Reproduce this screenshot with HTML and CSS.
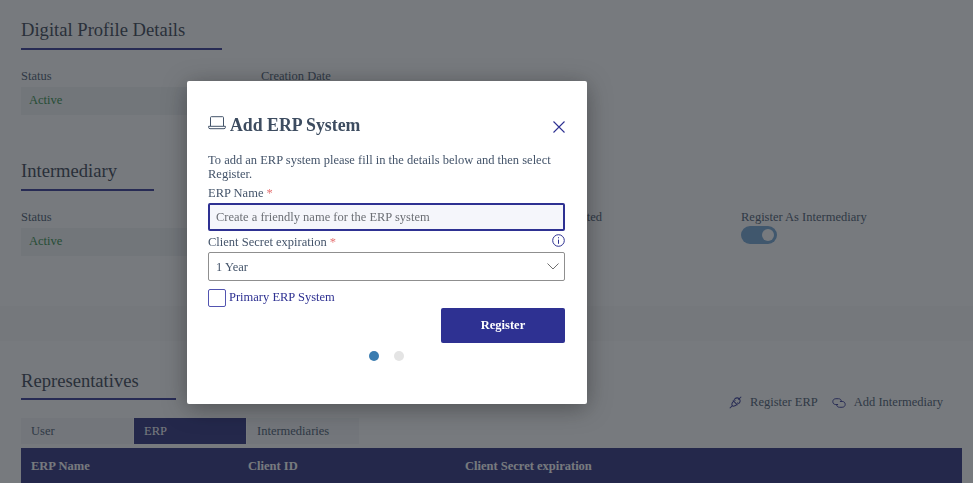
FILE: index.html

```html
<!DOCTYPE html>
<html lang="en">
<head>
  <meta charset="UTF-8" />
  <meta name="viewport" content="width=device-width, initial-scale=1.0"/>
  <title>Add ERP System</title>
  <link rel="stylesheet" href="styles.css">
</head>
<body>
  <div class="page">
    <section class="card">
      <h2 class="title title-profile">Digital Profile Details</h2>
      <div class="fields">
        <div class="field">
          <span class="field-label">Status</span>
          <div class="field-value active">Active</div>
        </div>
        <div class="field">
          <span class="field-label">Creation Date</span>
        </div>
      </div>
      <h2 class="title title-intermediary">Intermediary</h2>
      <div class="fields">
        <div class="field">
          <span class="field-label">Status</span>
          <div class="field-value active">Active</div>
        </div>
        <div class="field"></div>
        <div class="field">
          <span class="field-label">Intermediary Posted</span>
        </div>
        <div class="field">
          <span class="field-label">Register As Intermediary</span>
          <div class="toggle"><span class="knob"></span></div>
        </div>
      </div>
    </section>

    <div class="band"></div>

    <section class="card card-reps">
      <div class="reps-head">
        <h2 class="title title-reps">Representatives</h2>
        <div class="actions">
          <a class="action">
            <svg class="action-icon" width="13" height="13" viewBox="0 0 14 14" fill="none" stroke="#2e3192" stroke-width="1.1">
              <path d="M0.8 13.2 L4 10 M10 4 L13.2 0.8 M4.2 4.8 L9.2 9.8 M5 5.5 C2.6 7.6 2.8 9.6 3.6 10.4 C4.4 11.2 6.4 11.4 8.5 9 M5.4 3.6 L6.9 5.1 M8.9 7.1 L10.4 8.6 M6 3.2 C8 1.6 10 2 11 3 C12 4 12.4 6 10.8 8"/>
            </svg>
            Register ERP
          </a>
          <a class="action">
            <svg class="action-icon" width="14" height="10" viewBox="0 0 15 11" fill="none" stroke="#2e3192" stroke-width="1.1">
              <path d="M6.5 7.2 H4 C2 7.2 0.7 5.9 0.7 4 C0.7 2.1 2 0.8 4 0.8 H7 C8.9 0.8 10 2 10 3.4"/>
              <path d="M8.5 3.8 H11 C13 3.8 14.3 5.1 14.3 7 C14.3 8.9 13 10.2 11 10.2 H8 C6.1 10.2 5 9 5 7.6"/>
            </svg>
            Add Intermediary
          </a>
        </div>
      </div>
      <div class="tabs">
        <div class="tab">User</div>
        <div class="tab tab-on">ERP</div>
        <div class="tab">Intermediaries</div>
      </div>
      <div class="table-head">
        <div>ERP Name</div>
        <div>Client ID</div>
        <div>Client Secret expiration</div>
      </div>
    </section>
  </div>

  <div class="overlay"></div>

  <div class="modal">
    <div class="modal-head">
      <h3 class="modal-title">
        <svg class="laptop" width="18" height="14" viewBox="0 0 18 14" fill="none" stroke="#44546a" stroke-width="1">
          <path d="M2.5 10 V1.5 C2.5 1 2.8 0.7 3.3 0.7 H14.7 C15.2 0.7 15.5 1 15.5 1.5 V10"/>
          <path d="M0.6 10.3 H17.4 V11.3 C17.4 12.2 16.9 12.7 16 12.7 H2 C1.1 12.7 0.6 12.2 0.6 11.3 Z"/>
        </svg>
        Add ERP System
      </h3>
      <svg class="close" width="12" height="12" viewBox="0 0 12 12" fill="none" stroke="#2e3192" stroke-width="1.1">
        <path d="M0.5 0.5 L11.5 11.5 M11.5 0.5 L0.5 11.5"/>
      </svg>
    </div>
    <p class="intro">To add an ERP system please fill in the details below and then select Register.</p>
    <label class="form-label">ERP Name <span class="req">*</span></label>
    <input class="text-input" type="text" placeholder="Create a friendly name for the ERP system">
    <div class="label-row">
      <label class="form-label">Client Secret expiration <span class="req">*</span></label>
      <svg width="13" height="13" viewBox="0 0 13 13" fill="none" stroke="#2e3192" stroke-width="1">
        <circle cx="6.5" cy="6.5" r="5.8"/>
        <path d="M6.5 5.6 V9.8 M6.5 3.2 V4.3"/>
      </svg>
    </div>
    <div class="select-wrap">
      <select class="select-input">
        <option>1 Year</option>
      </select>
      <svg class="chevron" width="12" height="7" viewBox="0 0 12 7" fill="none" stroke="#6f6f6f" stroke-width="1">
        <path d="M0.5 0.5 L6 6 L11.5 0.5"/>
      </svg>
    </div>
    <div class="check-row">
      <span class="check-box"></span>
      <span class="check-label">Primary ERP System</span>
    </div>
    <div class="btn-row">
      <button class="btn-primary">Register</button>
    </div>
    <div class="dots">
      <span class="dot dot-on"></span>
      <span class="dot"></span>
    </div>
  </div>
</body>
</html>
```

FILE: styles.css

```css
* {
  box-sizing: border-box;
}
html, body {
  margin: 0;
  height: 100%;
  overflow: hidden;
}
body {
  font-family: "Liberation Serif", serif;
  font-size: 12.5px;
  color: #44546a;
  background-color: #fff;
}
.page {
  height: 483px;
  overflow: hidden;
}
.card {
  height: 306px;
  padding: 19px 11px 0 21px;
  background-color: #fff;
  box-shadow: 0 1px 2px rgba(0,0,0,0.25);
}
.card-reps {
  height: auto;
  padding-top: 29px;
  box-shadow: none;
}
.band {
  height: 35px;
  background-color: #fafafa;
}
.title {
  margin: 0;
  height: 31px;
  font-size: 18.6px;
  font-weight: 400;
  line-height: 22px;
  color: #333c4c;
  border-bottom: 2px solid #2e3192;
}
.title-profile {
  width: 201px;
}
.title-intermediary {
  width: 133px;
  margin-top: 45px;
}
.title-reps {
  width: 155px;
  height: 30px;
}
.fields {
  display: grid;
  grid-template-columns: repeat(4, 240px);
  margin-top: 19px;
}
.field-label {
  display: block;
  height: 18px;
  line-height: 15px;
}
.field-value {
  width: 170px;
  height: 28px;
  padding-left: 8px;
  line-height: 27px;
  background-color: #f1f4f5;
}
.active {
  color: #2b8a3e;
}
.toggle {
  display: flex;
  align-items: center;
  justify-content: flex-end;
  width: 36px;
  height: 18px;
  margin-top: -2px;
  padding-right: 3px;
  border-radius: 9px;
  background-color: #6fa3d2;
}
.knob {
  width: 12px;
  height: 12px;
  border-radius: 50%;
  background-color: #fff;
}
.reps-head {
  display: flex;
  justify-content: space-between;
  align-items: flex-end;
}
.actions {
  display: flex;
  gap: 14px;
  margin-right: 19px;
  margin-bottom: -10px;
}
.action {
  display: flex;
  align-items: center;
  gap: 8px;
}
.tabs {
  display: flex;
  gap: 1px;
  margin-top: 18px;
}
.tab {
  width: 112px;
  height: 26px;
  padding-left: 10px;
  line-height: 26px;
  background-color: #f3f5f7;
}
.tab-on {
  color: #fff;
  background-color: #25287a;
}
.table-head {
  display: grid;
  grid-template-columns: repeat(2, 217px) 1fr;
  height: 36px;
  margin-top: 4px;
  padding-left: 10px;
  line-height: 36px;
  font-weight: 700;
  color: #fff;
  background-color: #25287a;
}
.overlay {
  position: fixed;
  top: 0;
  left: 0;
  right: 0;
  bottom: 0;
  background-color: rgba(36,40,46,0.62);
}
.modal {
  position: fixed;
  top: 81px;
  left: 187px;
  width: 400px;
  height: 323px;
  padding: 31px 21px 0;
  border-radius: 2px;
  background-color: #fff;
  box-shadow: 0 4px 24px rgba(0,0,0,0.35);
}
.modal-head {
  display: flex;
  justify-content: space-between;
  align-items: center;
  height: 26px;
}
.modal-title {
  display: flex;
  align-items: center;
  gap: 4px;
  margin: 0;
  font-size: 17.8px;
  font-weight: 700;
  color: #3d4c60;
}
.laptop {
  margin-top: -5px;
}
.close {
  margin: 4px 1px 0 0;
}
.intro {
  margin: 15px 0 0;
  line-height: 14px;
  color: #44546a;
}
.form-label {
  display: block;
  height: 15px;
  line-height: 15px;
}
.intro + .form-label {
  margin-top: 5px;
}
.req {
  color: #e57373;
}
.text-input {
  display: block;
  width: 357px;
  height: 28px;
  margin-top: 2px;
  padding: 0 6px;
  border: 2px solid #2e3192;
  border-radius: 2px;
  outline: none;
  font-family: "Liberation Serif", serif;
  font-size: 12.5px;
  background-color: #f5f6fb;
}
.text-input::placeholder {
  color: #6c6f75;
  opacity: 1;
}
.label-row {
  display: flex;
  justify-content: space-between;
  align-items: center;
  margin-top: 4px;
}
.label-row svg {
  margin: -4px 1px 0 0;
}
.select-wrap {
  position: relative;
  margin-top: 2px;
}
.select-input {
  display: block;
  width: 357px;
  height: 29px;
  padding: 0 7px;
  border: 1px solid #8f8f8f;
  border-radius: 2px;
  font-family: "Liberation Serif", serif;
  font-size: 12.5px;
  color: #44546a;
  background-color: #fff;
  appearance: none;
}
.chevron {
  position: absolute;
  top: 11px;
  right: 7px;
}
.check-row {
  display: flex;
  gap: 3px;
  margin-top: 8px;
}
.check-box {
  width: 18px;
  height: 18px;
  border: 1.5px solid #5254b0;
  border-radius: 2px;
}
.check-label {
  line-height: 16px;
  color: #2e3192;
}
.btn-row {
  display: flex;
  justify-content: flex-end;
  width: 357px;
  margin-top: 1px;
}
.btn-primary {
  width: 124px;
  height: 35px;
  border: none;
  border-radius: 2px;
  font-family: "Liberation Serif", serif;
  font-size: 12.5px;
  font-weight: 700;
  color: #fff;
  background-color: #2e3192;
}
.dots {
  display: flex;
  justify-content: center;
  gap: 15px;
  margin-top: 8px;
  padding-right: 1px;
}
.dot {
  width: 10px;
  height: 10px;
  border-radius: 50%;
  background-color: #e4e4e4;
}
.dot-on {
  background-color: #3a7cb0;
}
```
